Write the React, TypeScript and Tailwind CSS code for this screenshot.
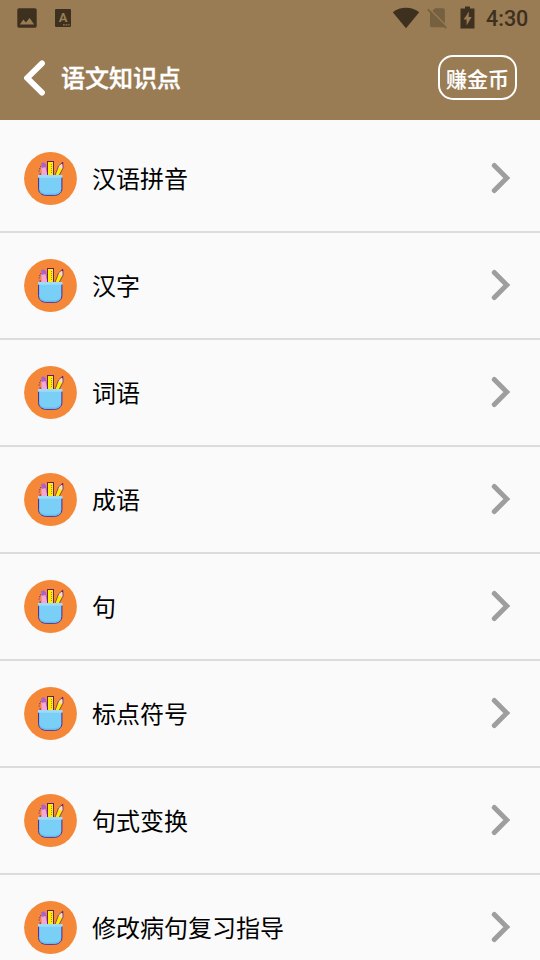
const topics = [
  '汉语拼音',
  '汉字',
  '词语',
  '成语',
  '句',
  '标点符号',
  '句式变换',
  '修改病句复习指导',
];

const StatusBar = () => (
  <div className="flex h-9 items-center justify-between pl-[17px] pr-3 text-[#3d301f]">
    <div className="flex items-center gap-[18px]">
      <svg width="20" height="20" viewBox="0 0 20 20" fill="currentColor">
        <path
          fillRule="evenodd"
          d="M2 .3h16a1.7 1.7 0 0 1 1.7 1.7v16a1.7 1.7 0 0 1-1.7 1.7H2A1.7 1.7 0 0 1 .3 18V2A1.7 1.7 0 0 1 2 .3ZM2.8 16.4h14.4L12.6 10l-3.7 4.6-2.5-3Z"
        />
      </svg>
      <div className="relative flex h-[18px] w-4 justify-center rounded-[1px] bg-[#3d301f] font-['Roboto',sans-serif] text-[13px] font-bold leading-[17px] text-[#997b54]">
        A
        <svg className="absolute bottom-px right-px" width="7" height="2" viewBox="0 0 8 2" fill="#997b54">
          <path d="M0 0h2v1.5H0ZM3 0h2v1.5H3ZM6 0h1.5v1.5H6Z" />
        </svg>
      </div>
    </div>
    <div className="flex items-center">
      <svg className="-mt-px" width="28" height="22" viewBox="0 0 28 22" fill="currentColor">
        <path d="M.8 5.2C8.5-.6 19.5-.6 27.2 5.2L14 21.2Z" />
      </svg>
      <svg className="ml-[7px]" width="21" height="22" viewBox="0 0 21 22">
        <path d="M8 1.2h8a1.8 1.8 0 0 1 1.8 1.8v15.4a1.8 1.8 0 0 1-1.8 1.8H4.8A1.8 1.8 0 0 1 3 18.4V6.2Z" fill="#75603f" />
        <path d="M1.8 1.4 20.4 20" stroke="#997b54" strokeWidth="1.6" />
        <path d="M.8 2.4 19.2 21" stroke="#75603f" strokeWidth="1.8" />
      </svg>
      <svg className="-mt-0.5 ml-[12px]" width="15" height="23" viewBox="0 0 15 23" fill="currentColor">
        <path fillRule="evenodd" d="M5 .5h5v2h4.5V22.5H.5V2.5H5ZM9 5.5 3.6 13.5h3v6l5-8.4h-3Z" />
      </svg>
      <span className="ml-[11px] mt-0.5 w-[42px] whitespace-nowrap font-['Roboto',sans-serif] text-[21.5px] font-medium leading-none">
        4:30
      </span>
    </div>
  </div>
);

// pencil cup on an orange disc, 1 unit = 1px
const CupIcon = () => (
  <svg className="shrink-0" width="53" height="53" viewBox="0 0 53 53">
    <circle cx="26.5" cy="26.5" r="26.4" fill="#f58838" />
    {/* pink pen */}
    <path d="M17.3 15 21.2 14l2.6 10h-6Z" fill="#f3a9cf" />
    <path d="M17 11.6 19 10.2l2 .8 1 3.8-4 1.2Z" fill="#a964cc" />
    <path d="M15 16h1.4v1.3H15ZM16 14h1.2v1.2H16ZM14.4 18.4h1.6v1h-1.6ZM15.6 21h1.2v2h-1.2Z" fill="#913f9b" />
    <path d="m21.4 12 2.4 11" stroke="#b45a9f" strokeWidth=".8" />
    {/* ruler */}
    <path d="M23 9h7v15h-7Z" fill="#5c1d7c" />
    <path d="M24 10h5v14h-5Z" fill="#ffed00" />
    <path d="M27 12h1v1h-1ZM27 14h1v1h-1ZM27 16h1v1h-1ZM27 18h1v1h-1ZM27 20h1v1h-1Z" fill="#b98500" />
    {/* pencil */}
    <path d="m38.9 10 .2 6-4.2 8h-4.4l4-10.4Z" fill="#ffed00" />
    <path d="m38.9 10 .2 5.4-1 1.8-3.7-2 .7-1.8Z" fill="#ffd9c2" />
    <path d="m31 23.4 3.6-9.6 4.2-3.6.3 5.8-3.9 7.4" fill="none" stroke="#64246c" strokeWidth=".8" />
    <path d="m37 11.6 1.9-1.8.1 2.8Z" fill="#64246c" />
    {/* cup */}
    <path d="M14.6 25v11.5c0 4.2 3.2 6.8 7.5 6.8h8.3c4.3 0 7.5-2.6 7.5-6.8V25" fill="#79cff5" stroke="#512494" />
    <path d="M15.5 37.5c1 2.3 3.3 3.9 6.6 3.9h8.3c3.3 0 5.6-1.6 6.6-3.9-.2 3.3-3 5.2-6.6 5.2h-8.3c-3.7 0-6.4-1.9-6.6-5.2Z" fill="#62bff0" />
    <path d="M14 23h24.5v2.7H14Z" fill="#a1daf6" />
  </svg>
);

const TopicRow = ({ title }: { title: string }) => (
  <li className="flex h-[107px] items-center border-b-2 border-[#dcdcdc] pl-6 pr-[29px]">
    <CupIcon />
    <span className="ml-[15px] flex-1 pb-[3px] text-[24px] leading-[35px] text-black">{title}</span>
    <svg className="mb-px" width="20" height="32" viewBox="0 0 20 32" fill="none">
      <path d="M3.3 3.5 15.8 16 3.3 28.5" stroke="#9e9e9e" strokeWidth="5" strokeLinecap="round" />
    </svg>
  </li>
);

export default function App() {
  return (
    <div className="h-[960px] w-[540px] overflow-hidden bg-[#fafafa] font-['Noto_Sans_CJK_SC',sans-serif]">
      <header className="h-[120px] bg-[#997b54]">
        <StatusBar />
        <div className="flex h-[83px] items-center pl-6 pr-[23px] text-white">
          <svg width="22" height="36" viewBox="0 0 22 36" fill="none">
            <path d="M18 3.4 3.2 18 18 32.6" stroke="currentColor" strokeWidth="5.8" strokeLinecap="round" />
          </svg>
          <h1 className="ml-[15px] flex-1 pb-[3px] text-[24px] font-medium leading-[35px] [-webkit-text-stroke:0.4px_white]">语文知识点</h1>
          <button className="flex h-[45px] w-[79px] items-center justify-center whitespace-nowrap rounded-[15px] border-2 border-white pt-px text-[21px] font-medium leading-none [-webkit-text-stroke:0.2px_white]">
            赚金币
          </button>
        </div>
      </header>
      <ul className="pt-[6px]">
        {topics.map((title) => (
          <TopicRow key={title} title={title} />
        ))}
      </ul>
    </div>
  );
}
